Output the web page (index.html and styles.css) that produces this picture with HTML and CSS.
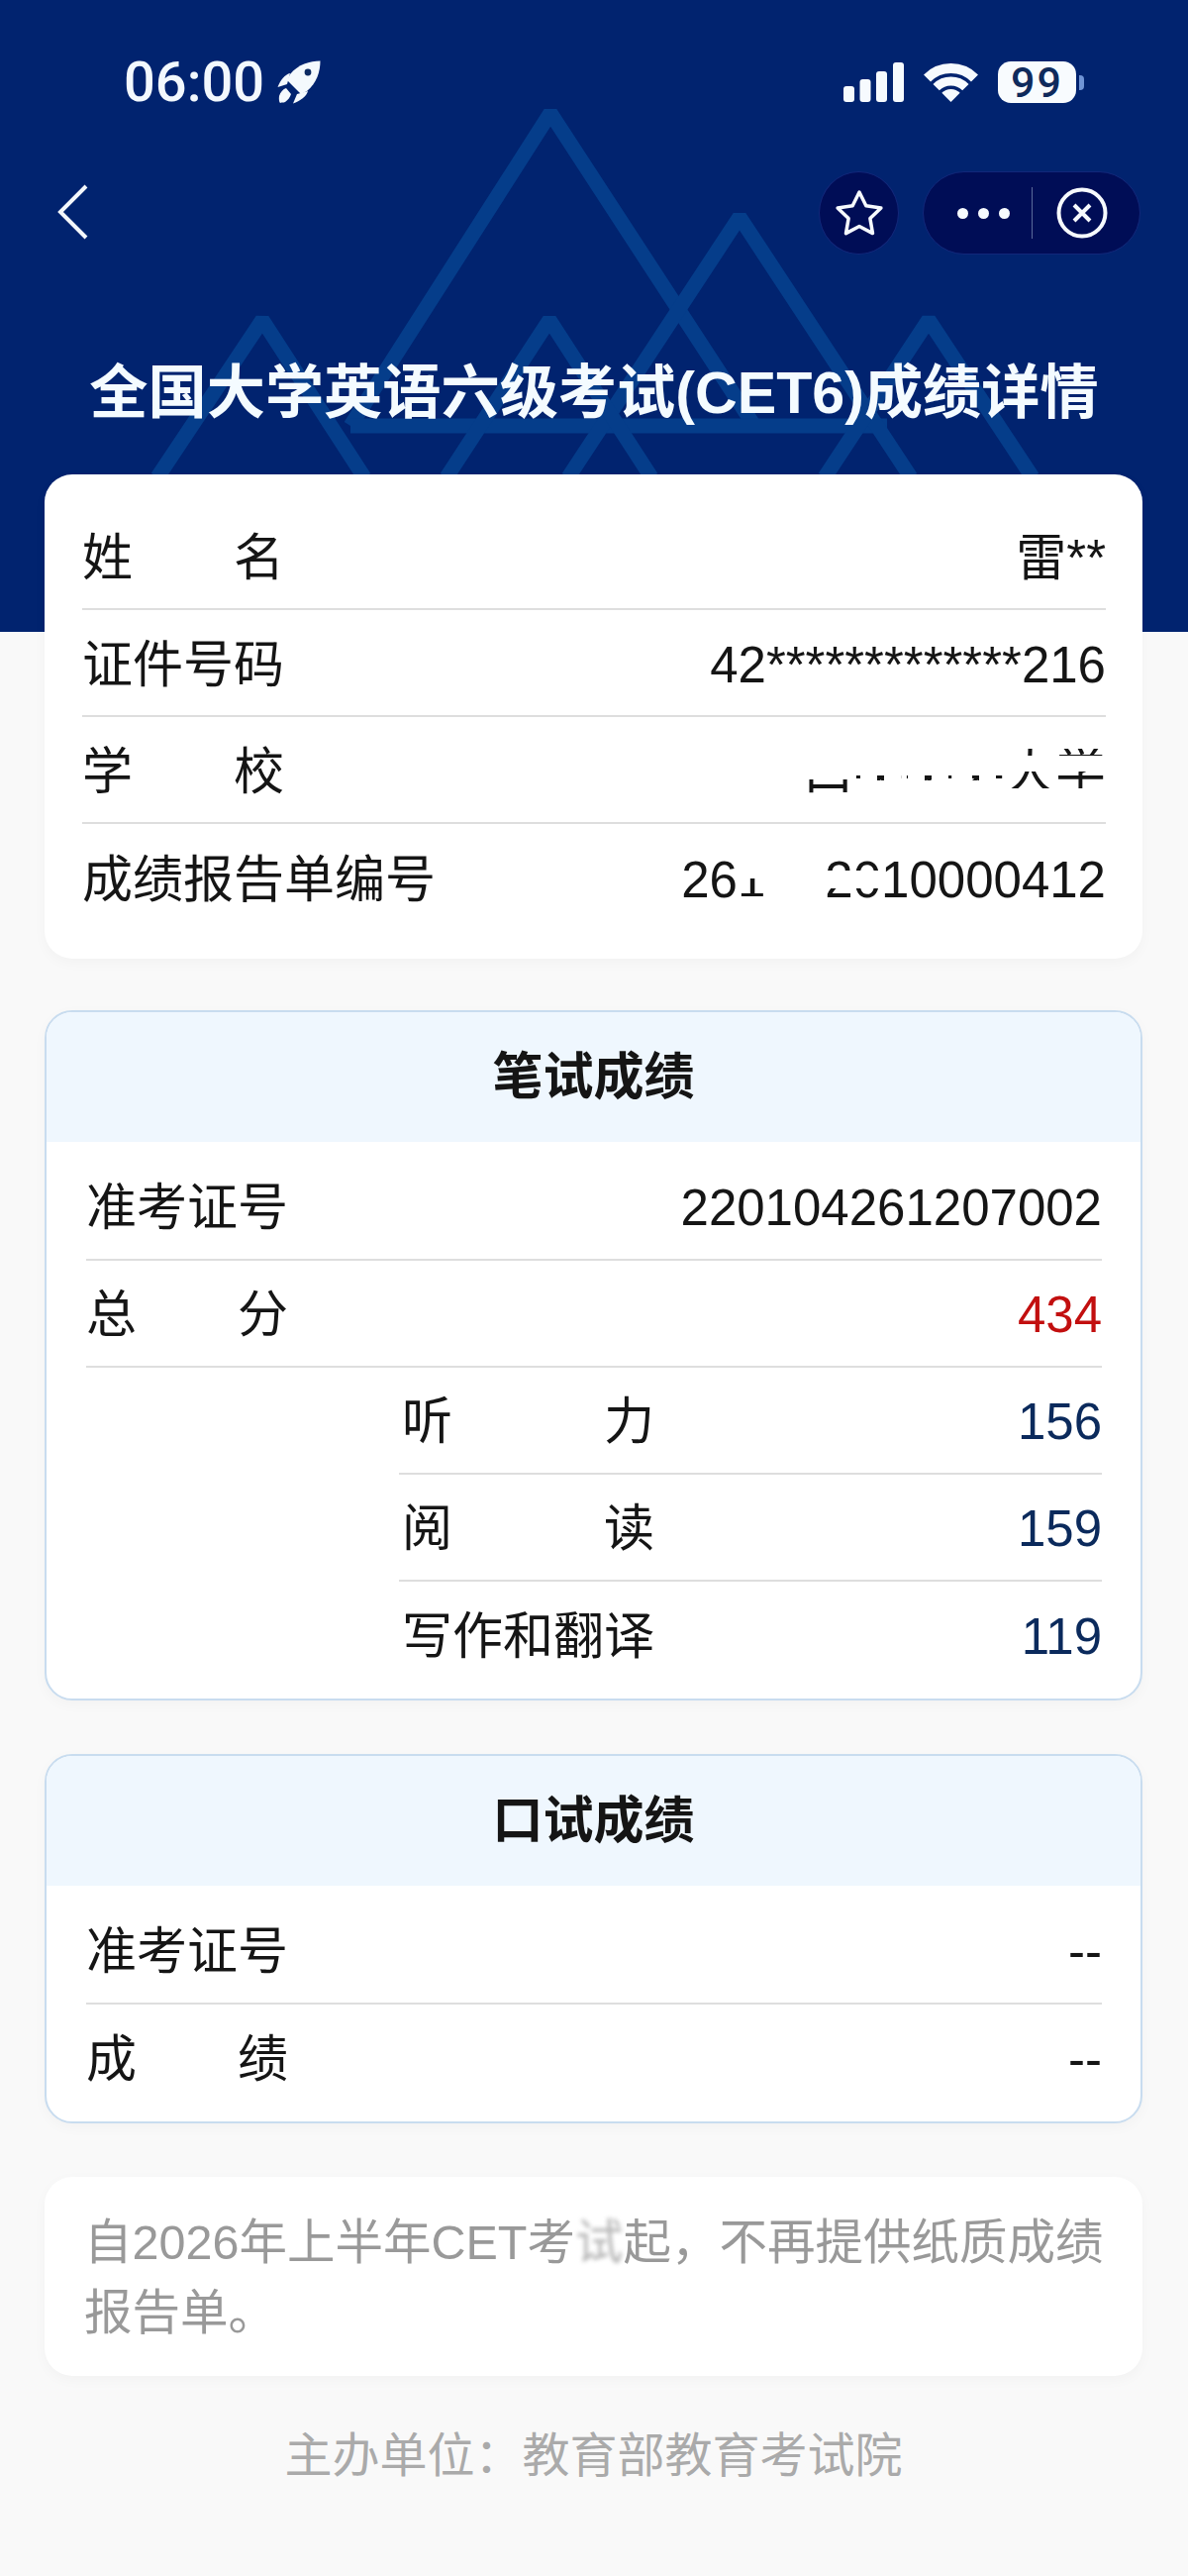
FILE: index.html
```html
<!DOCTYPE html>
<html lang="zh-CN">
<head>
  <meta charset="UTF-8"/>
  <title>全国大学英语六级考试(CET6)成绩详情</title>
  <meta name="viewport" content="width=device-width, initial-scale=1.0"/>
  <link rel="stylesheet" href="styles.css">
</head>
<body>

  <header class="hero">
    <svg class="peaks" viewBox="0 0 1200 638" aria-hidden="true">
      <path d="M354 430 L556 114 L762 430"/>
      <path d="M354 430 H896"/>
      <path d="M574 482 L747 219 L920 482"/>
      <path d="M159 482 L265 323 L368 482"/>
      <path d="M451 482 L555 323 L658 482"/>
      <path d="M833 482 L938 323 L1043 482"/>
    </svg>

    <div class="status">
      <div class="status-left">
        <span class="time">06:00</span>
        <svg class="rocket" viewBox="0 0 44 44" aria-hidden="true">
          <path d="M43.500.5C33 .5 21 4 13 14L10 20 24 34 30 31C40 23 43.500 11 43.500.5z"/>
          <path d="M13 13C8 14 3 20 .5 27L10 24z"/>
          <path d="M31 31C30 36 23 41 16 43.500L20 34z"/>
          <path d="M9 28c-3 1-6 4-7 8-.5 3 0 6 1 7 2-1 3 0 5-1 3-2 5-5 6-8z"/>
          <circle class="rocket-window" cx="31" cy="12" r="3.400"/>
        </svg>
      </div>
      <div class="status-right">
        <svg class="signal" viewBox="0 0 61 40" aria-hidden="true">
          <rect x="0" y="24" width="11" height="16" rx="3"/>
          <rect x="16.500" y="17" width="11" height="23" rx="3"/>
          <rect x="33" y="9" width="11" height="31" rx="3"/>
          <rect x="50" y="0" width="11" height="40" rx="3"/>
        </svg>
        <svg class="wifi" viewBox="0 0 55 40" aria-hidden="true">
          <path class="wifi-arc" d="M3.500 16A34 34 0 0 1 51.500 16" stroke-width="10"/>
          <path class="wifi-arc" d="M12.650 25.150A21 21 0 0 1 42.350 25.150" stroke-width="9"/>
          <path d="M27.500 40L18.300 30.800A13 13 0 0 1 36.700 30.800z"/>
        </svg>
        <div class="battery">
          <span class="battery-level">99</span>
          <span class="battery-nub"></span>
        </div>
      </div>
    </div>

    <nav class="nav">
      <svg class="back" viewBox="0 0 32 58" aria-hidden="true">
        <path d="M29 2 L3 28 L29 54"/>
      </svg>
      <div class="nav-actions">
        <div class="fav">
          <svg class="star" viewBox="0 0 50 48" aria-hidden="true">
            <path d="M25 3L31.800 16.700 46.900 18.900 35.900 29.600 38.500 44.600 25 37.500 11.500 44.600 14.100 29.600 3.100 18.900 18.200 16.700z"/>
          </svg>
        </div>
        <div class="capsule">
          <div class="dots"><i></i><i></i><i></i></div>
          <span class="capsule-line"></span>
          <svg class="close" viewBox="0 0 52 52" aria-hidden="true">
            <circle cx="26" cy="26" r="23.500"/>
            <path d="M18 18L34 34M34 18L18 34"/>
          </svg>
        </div>
      </div>
    </nav>

    <h1 class="title">全国大学英语六级考试(CET6)成绩详情</h1>
  </header>

  <main class="main">

    <section class="card card-info">
      <div class="row"><span class="label">姓名</span><span class="value">雷**</span></div>
      <div class="row"><span class="label">证件号码</span><span class="value">42*************216</span></div>
      <div class="row">
        <span class="label">学校</span>
        <span class="value school"><span class="wipe wipe-a">口</span><span class="wipe wipe-b">某某某</span><span class="wipe wipe-c">大学</span></span>
      </div>
      <div class="row">
        <span class="label label-wide">成绩报告单编号</span>
        <span class="value">26<span class="wipe wipe-d">1</span><span class="gap"></span><span class="wipe wipe-e">20</span>10000412</span>
      </div>
    </section>

    <section class="card card-score">
      <h2 class="card-head">笔试成绩</h2>
      <div class="card-body">
        <div class="row"><span class="label">准考证号</span><span class="value">220104261207002</span></div>
        <div class="row"><span class="label">总分</span><span class="value total">434</span></div>
        <div class="row row-sub"><span class="label">听力</span><span class="value part">156</span></div>
        <div class="row row-sub"><span class="label">阅读</span><span class="value part">159</span></div>
        <div class="row row-sub"><span class="label">写作和翻译</span><span class="value part">119</span></div>
      </div>
    </section>

    <section class="card card-score">
      <h2 class="card-head">口试成绩</h2>
      <div class="card-body">
        <div class="row"><span class="label">准考证号</span><span class="value">--</span></div>
        <div class="row"><span class="label">成绩</span><span class="value">--</span></div>
      </div>
    </section>

    <section class="card card-note">
      <p>自2026年上半年CET考<span class="smudge">试</span>起，不再提供纸质成绩报告单。</p>
    </section>

    <p class="footer">主办单位：教育部教育考试院</p>

  </main>

</body>
</html>
```

FILE: styles.css
```css
* {
  box-sizing: border-box;
}
body {
  margin: 0;
  background-color: #f9f9f9;
  color: #151515;
  font-family: "Liberation Sans", "Noto Sans CJK SC", sans-serif;
  font-size: 51px;
}

/* top blue block */
.hero {
  position: relative;
  height: 638px;
  background-color: #01236f;
  overflow: hidden;
}
.hero > * {
  position: relative;
}
.hero > .peaks {
  position: absolute;
  top: 0;
  left: 0;
  width: 1200px;
  height: 638px;
}
.peaks path {
  fill: none;
  stroke: #053d8a;
  stroke-width: 15;
  stroke-linejoin: bevel;
}

.status {
  display: flex;
  justify-content: space-between;
  align-items: center;
  height: 46px;
  margin-top: 60px;
  padding: 0 105px 0 125px;
}
.status-left,
.status-right {
  display: flex;
  align-items: center;
}
.time {
  color: #f2f8fd;
  font-family: Roboto, sans-serif;
  font-weight: 500;
  font-size: 56px;
  line-height: 46px;
}
.rocket {
  width: 44px;
  height: 44px;
  margin-left: 13px;
  fill: #f4f9fd;
}
.rocket-window {
  fill: #0c2a62;
}
.status-right {
  gap: 20px;
}
.signal {
  width: 61px;
  height: 40px;
  fill: #f6fafe;
}
.wifi {
  width: 55px;
  height: 40px;
  fill: #f6fafe;
}
.wifi-arc {
  fill: none;
  stroke: #f6fafe;
}
.battery {
  display: flex;
  align-items: center;
  gap: 3px;
}
.battery-level {
  width: 79px;
  height: 42px;
  border-radius: 13px;
  background-color: #f8fbfe;
  color: #0f2a5c;
  font-family: Roboto, sans-serif;
  font-weight: 500;
  font-size: 43px;
  letter-spacing: 2px;
  line-height: 42px;
  text-align: center;
}
.battery-nub {
  width: 5px;
  height: 15px;
  border-radius: 0 4px 4px 0;
  background-color: #6f94d6;
}

.nav {
  display: flex;
  justify-content: space-between;
  align-items: center;
  height: 84px;
  margin-top: 67px;
  padding: 0 48px 0 58px;
}
.back {
  width: 32px;
  height: 58px;
  fill: none;
  stroke: #f4f8fc;
  stroke-width: 4;
}
.nav-actions {
  display: flex;
  gap: 24px;
}
.fav {
  display: flex;
  justify-content: center;
  align-items: center;
  width: 81px;
  height: 84px;
  border-radius: 50%;
  background-color: #000d56;
  border: 1px solid #12287a;
}
.star {
  width: 50px;
  height: 48px;
  fill: none;
  stroke: #f6fafe;
  stroke-width: 3.500;
  stroke-linejoin: round;
}
.capsule {
  display: flex;
  align-items: center;
  width: 220px;
  height: 84px;
  padding-left: 34px;
  border-radius: 42px;
  background-color: #000d56;
  border: 1px solid #12287a;
}
.dots {
  display: flex;
  gap: 10px;
}
.dots i {
  width: 11px;
  height: 11px;
  border-radius: 50%;
  background-color: #f6fafe;
}
.capsule-line {
  width: 1px;
  height: 52px;
  margin: 0 24px 0 22px;
  background-color: #5a6a9a;
}
.close {
  width: 52px;
  height: 52px;
  fill: none;
  stroke: #f6fafe;
  stroke-width: 4;
}

.title {
  margin: 105px 0 0;
  color: #f4fbff;
  font-size: 59.200px;
  font-weight: 600;
  line-height: 70px;
  text-align: center;
  white-space: nowrap;
}

/* cards */
.main {
  position: relative;
  margin: -159px 46px 0 45px;
}
.card {
  margin-bottom: 54px;
  border-radius: 28px;
  background-color: #fff;
  box-shadow: 0 4px 14px rgba(0, 0, 0, 0.03);
}
.card-info {
  margin-bottom: 52px;
  padding: 29px 37px 28px 38px;
}
.card-score {
  overflow: hidden;
  border: 2px solid #c8dcef;
}
.card-head {
  margin: 0;
  height: 131px;
  background-color: #eff7fe;
  font-size: 51px;
  font-weight: 700;
  line-height: 131px;
  text-align: center;
}
.card-body {
  padding: 12px 39px 10px 40px;
}
.row {
  display: flex;
  justify-content: space-between;
  align-items: center;
  height: 108px;
  padding-top: 4px;
  border-bottom: 2px solid #dedede;
  line-height: 60px;
}
.row:last-child {
  border-bottom: none;
}
.card-info .row {
  padding-top: 6px;
}
.row-sub {
  margin-left: 316px;
  padding-left: 3px;
}
.label {
  width: 4em;
  text-align-last: justify;
  white-space: nowrap;
}
.label-wide {
  width: auto;
  text-align-last: left;
}
.row-sub .label {
  width: 5em;
}
.total {
  color: #c20f0f;
}
.part {
  color: #0b2a5c;
}

/* the parts of the number and the school that were painted out */
.wipe {
  display: inline-block;
  height: 60px;
}
.wipe-a {
  -webkit-mask-image: linear-gradient(#0000 37px, #000 37px);
  mask-image: linear-gradient(#0000 37px, #000 37px);
}
.wipe-b {
  -webkit-mask-image: linear-gradient(#0000 33px, #000 33px, #000 38px, #0000 38px), repeating-linear-gradient(90deg, #000 0, #000 7px, #0000 7px, #0000 24px);
  mask-image: linear-gradient(#0000 33px, #000 33px, #000 38px, #0000 38px), repeating-linear-gradient(90deg, #000 0, #000 7px, #0000 7px, #0000 24px);
  -webkit-mask-composite: source-in;
  mask-composite: intersect;
}
.wipe-c {
  -webkit-mask-image: linear-gradient(#0000 6px, #000 6px, #000 13px, #0000 13px, #0000 29px, #000 29px, #000 46px, #0000 46px);
  mask-image: linear-gradient(#0000 6px, #000 6px, #000 13px, #0000 13px, #0000 29px, #000 29px, #000 46px, #0000 46px);
}
.wipe-d {
  -webkit-mask-image: linear-gradient(#0000 28px, #000 28px, #000 46px, #0000 46px);
  mask-image: linear-gradient(#0000 28px, #000 28px, #000 46px, #0000 46px);
}
.wipe-e {
  -webkit-mask-image: linear-gradient(#000 20px, #0000 20px, #0000 38px, #000 38px);
  mask-image: linear-gradient(#000 20px, #0000 20px, #0000 38px, #000 38px);
}
.gap {
  display: inline-block;
  width: 60px;
}

.card-note {
  margin-bottom: 51px;
  padding: 31px 38px 28px 40px;
}
.card-note p {
  margin: 0;
  color: #999;
  font-size: 48.500px;
  line-height: 71px;
}
.smudge {
  filter: blur(2px);
  opacity: 0.7;
}
.footer {
  margin: 0;
  color: #aaa;
  font-size: 48px;
  line-height: 60px;
  text-align: center;
}
```
